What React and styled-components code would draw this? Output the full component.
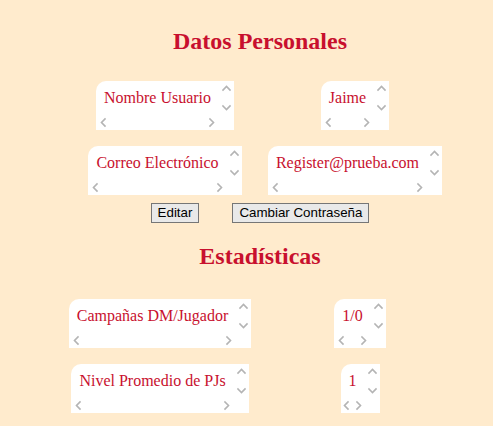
import React from "react";
import styled, { createGlobalStyle } from "styled-components";

const Global = createGlobalStyle`
  html, body { margin: 0; padding: 0; }
  body {
    background: #ffebcd;
    font-family: "Liberation Serif", "Times New Roman", serif;
    padding: 8px;
  }
`;

const Main = styled.main`
  width: 400px;
  margin-left: 52px;
  display: flex;
  flex-direction: column;
  align-items: center;
`;

const Title = styled.h2`
  margin: ${(p) => p.$top}px 0 0;
  font-size: 24px;
  line-height: 27px;
  font-weight: bold;
  color: #c8102e;
  text-align: center;
`;

const Grid = styled.div`
  display: grid;
  grid-template-columns: ${(p) => p.$col}px ${(p) => p.$col}px;
  row-gap: 16px;
  margin-top: ${(p) => p.$top}px;
  justify-items: center;
`;

const Field = styled.div`
  display: inline-grid;
  grid-template-columns: auto 15px;
  grid-template-rows: auto 15px;
  background: #ffffff;
  border-top-left-radius: 10px;
`;

const FieldText = styled.div`
  padding: 8px;
  white-space: nowrap;
  font-size: 16px;
  line-height: 18px;
  color: #c8102e;
`;

const VBar = styled.div`
  display: flex;
  flex-direction: column;
  justify-content: space-between;
`;

const HBar = styled.div`
  display: flex;
  justify-content: space-between;
  width: 0;
  min-width: 100%;
`;

const ArrowSlot = styled.span`
  flex: 0 1 15px;
  min-width: 0;
  display: flex;
  justify-content: center;
`;

const Arrow = styled.svg`
  display: block;
  width: 15px;
  height: 15px;
  flex: none;
`;

const arrowPts = {
  up: "4,9 7.5,5.5 11,9",
  down: "4,6 7.5,9.5 11,6",
  left: "9,4 5.5,7.5 9,11",
  right: "6,4 9.5,7.5 6,11",
};

function Chevron({ dir }) {
  return (
    <ArrowSlot>
      <Arrow viewBox="0 0 15 15">
        <polyline
          points={arrowPts[dir]}
          fill="none"
          stroke="#b4b4b4"
          strokeWidth="1.6"
          strokeLinecap="square"
        />
      </Arrow>
    </ArrowSlot>
  );
}

function ScrollBox({ children }) {
  return (
    <Field>
      <FieldText>{children}</FieldText>
      <VBar>
        <Chevron dir="up" />
        <Chevron dir="down" />
      </VBar>
      <HBar>
        <Chevron dir="left" />
        <Chevron dir="right" />
      </HBar>
      <div />
    </Field>
  );
}

const Actions = styled.div`
  display: flex;
  gap: 33px;
  margin-top: 8px;
`;

const Button = styled.button`
  font-family: "Liberation Sans", Arial, sans-serif;
  font-size: 13.33px;
  line-height: 16px;
  padding: 1px 6px;
  background: #e9e9e9;
  border: 1px solid #767676;
  border-radius: 0;
  color: #000;
`;

export default function App() {
  return (
    <>
      <Global />
      <Main>
        <Title $top={20}>Datos Personales</Title>
        <Grid $col={190} $top={26}>
          <ScrollBox>Nombre Usuario</ScrollBox>
          <ScrollBox>Jaime</ScrollBox>
          <ScrollBox>Correo Electrónico</ScrollBox>
          <ScrollBox>Register@prueba.com</ScrollBox>
        </Grid>
        <Actions>
          <Button>Editar</Button>
          <Button>Cambiar Contraseña</Button>
        </Actions>
        <Title $top={20}>Estadísticas</Title>
        <Grid $col={200} $top={29}>
          <ScrollBox>Campañas DM/Jugador</ScrollBox>
          <ScrollBox>1/0</ScrollBox>
          <ScrollBox>Nivel Promedio de PJs</ScrollBox>
          <ScrollBox>1</ScrollBox>
        </Grid>
      </Main>
    </>
  );
}
